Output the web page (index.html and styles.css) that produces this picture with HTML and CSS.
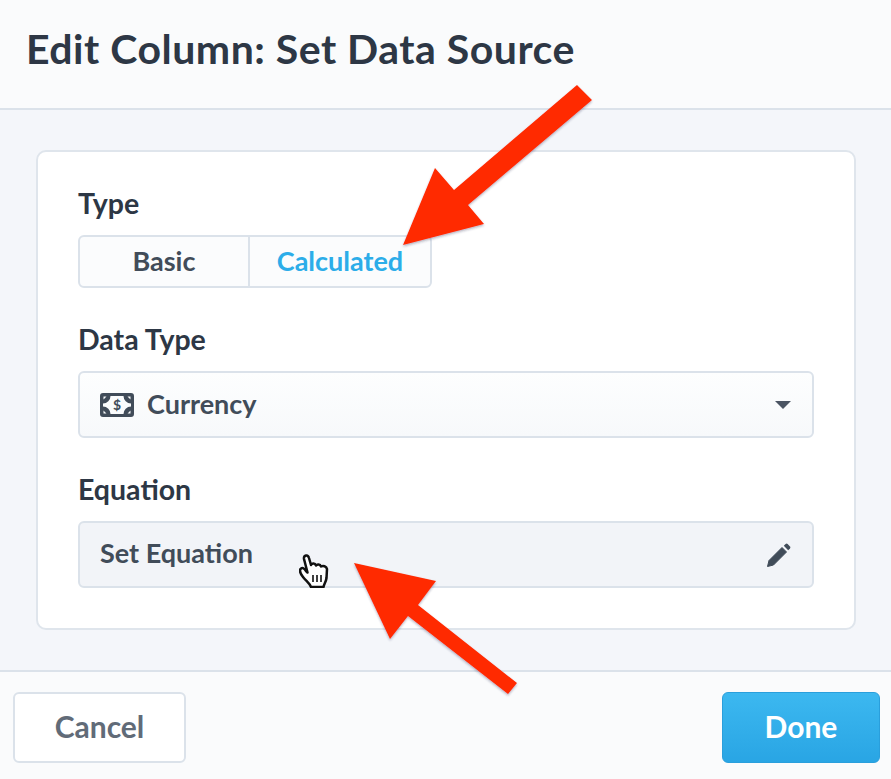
FILE: index.html
```html
<!DOCTYPE html>
<html lang="en">
    <head>
        <meta charset="utf-8">
        <title>Edit Column: Set Data Source</title>
        <link rel="stylesheet" href="styles.css">
    </head>
    <body>
        <div class="dialog">
            <header class="dialog-header">
                <h1>Edit Column: Set Data Source</h1>
            </header>

            <main class="dialog-body">
                <section class="card">
                    <div class="field">
                        <label class="field-label">Type</label>
                        <div class="segmented">
                            <button class="segment">Basic</button>
                            <button class="segment active">Calculated</button>
                        </div>
                    </div>

                    <div class="field">
                        <label class="field-label">Data Type</label>
                        <div class="select">
                            <svg class="money-icon" viewBox="0 0 34 24" width="34" height="24">
                                <path fill="#414c59" fill-rule="evenodd" d="M3 0h28a3 3 0 0 1 3 3v18a3 3 0 0 1-3 3H3a3 3 0 0 1-3-3V3a3 3 0 0 1 3-3zM10.500 3a7.500 7.500 0 0 1-7.500 7.500v3a7.500 7.500 0 0 1 7.500 7.500h13a7.500 7.500 0 0 1 7.500-7.500v-3a7.500 7.500 0 0 1-7.500-7.500zM3.500 3.500h3l-3 3zM30.500 3.500h-3l3 3zM3.500 20.500h3l-3-3zM30.500 20.500h-3l3-3z"/>
                                <text class="money-sign" x="17" y="17" text-anchor="middle">$</text>
                            </svg>
                            <span class="select-value">Currency</span>
                            <span class="caret"></span>
                        </div>
                    </div>

                    <div class="field">
                        <label class="field-label">Equation</label>
                        <div class="equation">
                            <span class="equation-text">Set Equation</span>
                            <svg viewBox="0 0 26 26" width="26" height="26">
                                <path fill="#414c59" stroke="#414c59" stroke-linejoin="round" d="M1.500 24.500l1.500-6L16 5.500l4.500 4.500L7.500 23z"/>
                                <path fill="#414c59" d="M17.800 3.800l1.800-1.800a1.500 1.500 0 0 1 2 0l2.400 2.400a1.500 1.500 0 0 1 0 2l-1.800 1.800z"/>
                            </svg>
                        </div>
                    </div>
                </section>
            </main>

            <footer class="dialog-footer">
                <button class="btn btn-cancel">Cancel</button>
                <button class="btn btn-done">Done</button>
            </footer>
        </div>

        <!-- Annotations drawn over the screenshot -->
        <svg class="annotations" viewBox="0 0 891 779" width="891" height="779">
            <defs>
                <filter id="arrow-shadow" x="-10%" y="-10%" width="120%" height="120%">
                    <feDropShadow dx="0" dy="1.500" stdDeviation="1" flood-color="#2b2b4a" flood-opacity="0.35"/>
                </filter>
            </defs>
            <polygon filter="url(#arrow-shadow)" fill="#ff2a00" points="577,85 592,100 468,205 484,224 403,245 435,168 454,190"/>
            <polygon filter="url(#arrow-shadow)" fill="#ff2a00" points="354,563 436,581 418,605 517,683 508,694 408,616 390,639"/>
        </svg>

        <svg class="hand-cursor" viewBox="0 0 30 34" width="30" height="34">
            <path fill="#fff" stroke="#111" stroke-width="2.500" stroke-linejoin="round" d="M1.500 15C3 13 5 14 7 17l1.500 1.500L5 5C4.500 1 9 0 10 4l2 7c1-2 4-2 5 .5 1-1.500 4-1.500 5 1 2-1 5.500-.5 6 2.500l-.5 9c-.5 4-2.500 6-3 9H12c-1.500-4-5-6-8-10-2-2.500-4-5.500-2.500-8z"/>
            <path stroke="#111" stroke-width="1.600" d="M14 21v7M18 21v7M22 21v7"/>
        </svg>
    </body>
</html>
```

FILE: styles.css
```css
* {
    box-sizing: border-box;
}

body {
    margin: 0;
    width: 891px;
    height: 779px;
    overflow: hidden;
    position: relative;
    background-color: #f4f6fa;
    color: #2d3745;
    font-family: "Lato", "Noto Sans", sans-serif;
}

.dialog {
    display: flex;
    flex-direction: column;
    height: 779px;
}

.dialog-header {
    height: 110px;
    padding: 26px 26px 0;
    background-color: #fafbfc;
    border-bottom: 2px solid #dbe2ea;
}

.dialog-header h1 {
    margin: 0;
    font-size: 41px;
    line-height: 46px;
    letter-spacing: 0.5px;
    font-weight: 700;
}

.dialog-body {
    flex: 1;
    padding: 40px 35px 40px 36px;
}

.card {
    height: 480px;
    padding: 38px 40px 0;
    background-color: #fff;
    border: 2px solid #dfe5ec;
    border-radius: 10px;
}

.field {
    margin-bottom: 38px;
}

.field-label {
    display: block;
    height: 30px;
    margin-bottom: 15px;
    font-size: 28.500px;
    line-height: 27px;
    font-weight: 700;
}

.segmented {
    display: flex;
    width: 354px;
    height: 53px;
    border: 2px solid #dbe2ea;
    border-radius: 6px;
    background-color: #fbfcfd;
}

.segment {
    padding: 0 0 3px;
    border: 0;
    background: none;
    font: inherit;
    font-size: 27px;
    font-weight: 700;
    color: #414c59;
}

.segment:first-child {
    width: 170px;
    border-right: 2px solid #dbe2ea;
}

.segment.active {
    flex: 1;
    color: #2cade9;
}

.select,
.equation {
    display: flex;
    align-items: center;
    height: 67px;
    padding: 0 20px;
    border: 2px solid #dbe2ea;
    border-radius: 6px;
    font-size: 27px;
    font-weight: 700;
    color: #414c59;
}

.select {
    background: linear-gradient(#fdfefe, #f7f9fb);
}

.money-icon {
    margin-right: 13px;
}

.money-sign {
    font-size: 14px;
    fill: #414c59;
}

.select-value {
    flex: 1;
    padding-bottom: 3px;
}

.caret {
    width: 0;
    height: 0;
    margin-right: 1px;
    border-left: 8px solid transparent;
    border-right: 8px solid transparent;
    border-top: 8px solid #4b5563;
}

.equation {
    justify-content: space-between;
    background-color: #f2f4f8;
}

.equation-text {
    padding-bottom: 5px;
}

.dialog-footer {
    display: flex;
    justify-content: space-between;
    height: 109px;
    padding: 20px 11px 0 13px;
    background-color: #fafbfc;
    border-top: 2px solid #dbe2ea;
}

.btn {
    height: 71px;
    padding: 0 0 4px;
    border-radius: 6px;
    font: inherit;
    font-size: 30px;
    font-weight: 700;
}

.btn-cancel {
    width: 173px;
    background-color: #fff;
    border: 2px solid #dbe2ea;
    color: #616b78;
}

.btn-done {
    width: 158px;
    background: linear-gradient(#3cb8f0, #29a5e4);
    border: 1px solid #2a9fdc;
    color: #fff;
}

.annotations {
    position: absolute;
    left: 0;
    top: 0;
}

.hand-cursor {
    position: absolute;
    left: 299px;
    top: 554px;
}
```
